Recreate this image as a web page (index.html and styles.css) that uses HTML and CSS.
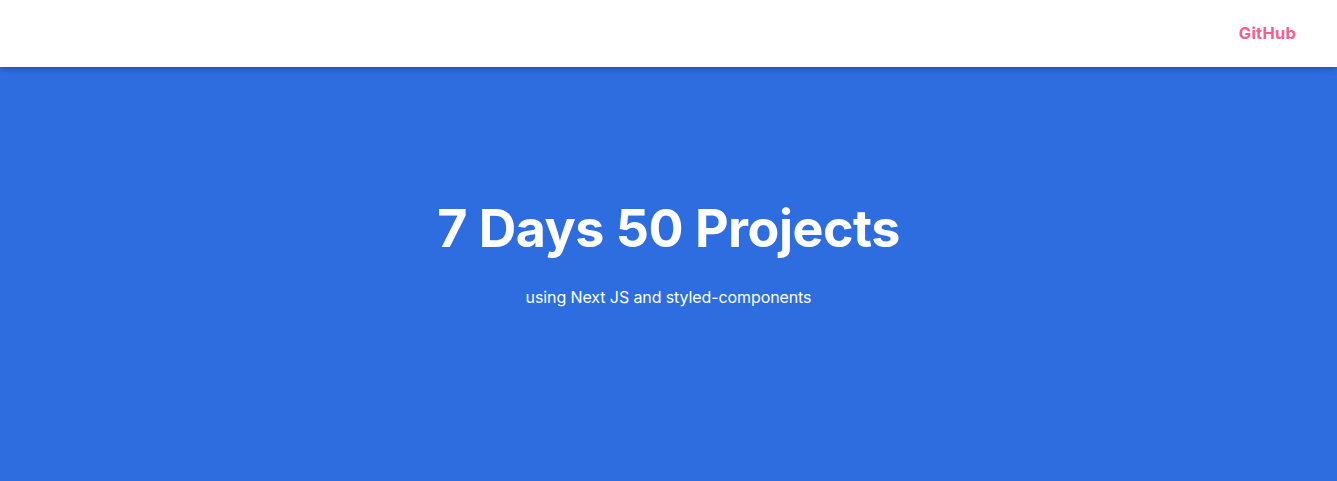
FILE: index.html
```html
<!DOCTYPE html>
<html lang="en">
<head>
<meta charset="utf-8">
<title>7 Days 50 Projects</title>
<link rel="stylesheet" href="styles.css">
</head>
<body>
<header class="nav">
  <a class="nav-link" href="#">GitHub</a>
</header>
<main class="hero">
  <h1 class="hero-title">7 Days 50 Projects</h1>
  <p class="hero-sub">using Next JS and styled-components</p>
</main>
</body>
</html>
```

FILE: styles.css
```css
* { box-sizing: border-box; }
html, body { margin: 0; padding: 0; }
body {
  font-family: Inter, "Noto Sans", sans-serif;
  background: #2e6ddf;
  min-height: 100vh;
}
.nav {
  position: relative;
  z-index: 2;
  height: 67px;
  background: #ffffff;
  display: flex;
  justify-content: flex-end;
  align-items: center;
  padding: 0 41px 2px 0;
  box-shadow: 0 2px 6px rgba(0, 0, 0, 0.25);
}
.nav-link {
  color: #f2608f;
  font-weight: 700;
  font-size: 16.5px;
  letter-spacing: 0.2px;
  text-decoration: none;
}
.hero {
  display: flex;
  flex-direction: column;
  align-items: center;
  padding-top: 131px;
  color: #ffffff;
}
.hero-title {
  margin: 0;
  font-size: 52px;
  font-weight: 700;
  letter-spacing: -0.5px;
  line-height: 1.2;
}
.hero-sub {
  margin: 27px 0 0;
  font-size: 16px;
  font-weight: 400;
  letter-spacing: -0.1px;
}
```
